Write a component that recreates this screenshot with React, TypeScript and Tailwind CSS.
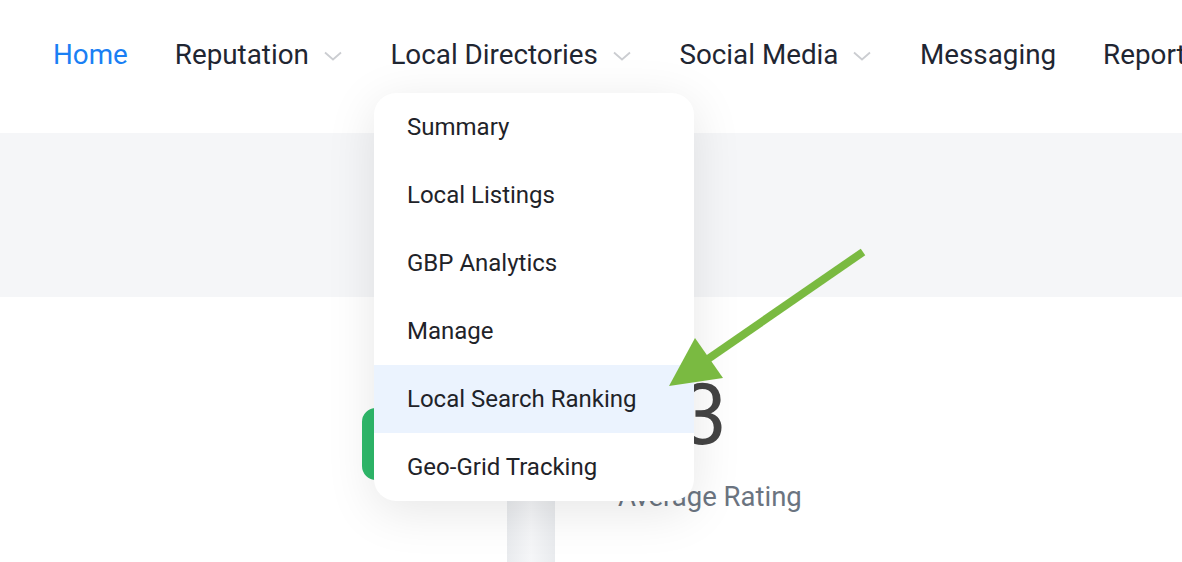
import React from 'react';

type NavItem = {
  label: string;
  active?: boolean;
  hasMenu?: boolean;
};

const navItems: NavItem[] = [
  { label: 'Home', active: true },
  { label: 'Reputation', hasMenu: true },
  { label: 'Local Directories', hasMenu: true },
  { label: 'Social Media', hasMenu: true },
  { label: 'Messaging' },
  { label: 'Reports' },
];

const directoryLinks = [
  'Summary',
  'Local Listings',
  'GBP Analytics',
  'Manage',
  'Local Search Ranking',
  'Geo-Grid Tracking',
];

const Chevron: React.FC = () => (
  <svg width="18" height="10" viewBox="0 0 18 10" fill="none" className="mt-[2px] mr-[1.5px]">
    <path d="M1 1.5l8 7 8-7" stroke="#cbcdd1" strokeWidth="1.8" />
  </svg>
);

const App: React.FC = () => {
  const highlighted = 'Local Search Ranking';

  return (
    <div className="relative w-[1182px] h-[562px] overflow-hidden bg-white font-['Roboto',sans-serif]">
      {/* Top navigation */}
      <nav className="h-[133px] pt-[39px] pl-[53px] flex items-start gap-[47px] whitespace-nowrap">
        {navItems.map((item) => (
          <div key={item.label} className="flex items-center gap-[15px]">
            <span
              className={
                item.active
                  ? 'text-[27.8px] leading-[32px] text-[#1a7ff4]'
                  : 'text-[27.8px] leading-[32px] text-[#1f2632]'
              }
            >
              {item.label}
            </span>
            {item.hasMenu && <Chevron />}
          </div>
        ))}
      </nav>

      {/* Page header band */}
      <div className="h-[164px] bg-[#f5f6f8]" />

      {/* Rating summary */}
      <div className="flex items-start pl-[362px] pt-[76px]">
        <div className="w-[244px] flex flex-col">
          <div className="mt-[35px] w-[200px] h-[72px] rounded-[14px] border-[12px] border-[#2fba6b]" />
          <div className="ml-[145px] mt-[10px] w-[48px] h-[80px] bg-gradient-to-r from-[#e9ebee] via-[#f5f6f8] to-[#e9ebee]" />
        </div>
        <div className="flex flex-col items-start">
          <span className="ml-[3px] text-[85px] leading-none text-[#444444]">4.3</span>
          <span className="mt-[24px] ml-[12px] text-[27.5px] leading-[30px] text-[#6b7480]">Average Rating</span>
        </div>
      </div>

      {/* Local Directories dropdown */}
      <div className="absolute left-[374px] top-[93px] w-[320px] rounded-[22px] overflow-hidden bg-white shadow-[0_10px_50px_rgba(0,0,0,0.10)]">
        {directoryLinks.map((link) => (
          <div
            key={link}
            className={
              link === highlighted
                ? 'h-[68px] flex items-center px-[33px] bg-[#ebf3fe] text-[24px] text-[#1f2329]'
                : 'h-[68px] flex items-center px-[33px] text-[24px] text-[#1f2329]'
            }
          >
            {link}
          </div>
        ))}
      </div>

      {/* Annotation arrow */}
      <svg
        className="absolute left-0 top-0 pointer-events-none"
        width="1182"
        height="562"
        viewBox="0 0 1182 562"
      >
        <line x1="863" y1="252" x2="708" y2="359" stroke="#7aba41" strokeWidth="8" />
        <polygon points="669,386 695,338 723,378" fill="#7aba41" />
      </svg>
    </div>
  );
};

export default App;
